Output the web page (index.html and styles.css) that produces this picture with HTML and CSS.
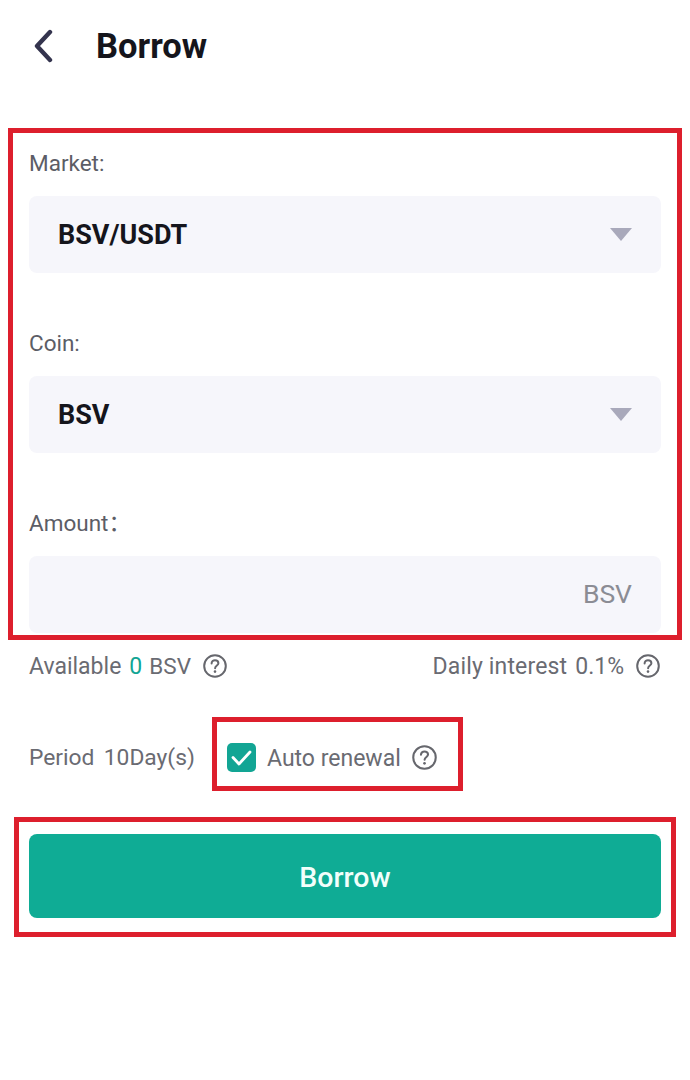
FILE: index.html
```html
<!DOCTYPE html>
<html lang="en">
<head>
    <meta charset="UTF-8">
    <meta name="viewport" content="width=device-width, initial-scale=1.0">
    <title>Borrow</title>
    <link rel="stylesheet" href="styles.css">
</head>
<body>
    <!-- Header -->
    <div class="header">
        <svg class="back" viewBox="0 0 24 34" width="24" height="34">
            <path d="M19 3 L6 17 L19 31" fill="none" stroke="#34344e" stroke-width="4.4" stroke-linecap="round" stroke-linejoin="round"/>
        </svg>
        <h1>Borrow</h1>
    </div>

    <!-- Form -->
    <div class="form-box">
        <div class="label label-first">Market:</div>
        <div class="field">
            <span class="value">BSV/USDT</span>
            <span class="caret"></span>
        </div>
        <div class="label">Coin:</div>
        <div class="field">
            <span class="value">BSV</span>
            <span class="caret"></span>
        </div>
        <div class="label">Amount<span class="colon">：</span></div>
        <div class="field field-input">
            <span class="unit">BSV</span>
        </div>
    </div>

    <!-- Info -->
    <div class="info-row">
        <div class="info">
            <span>Available</span>
            <span class="zero">0</span>
            <span class="coin">BSV</span>
            <svg class="help" viewBox="0 0 24 24"><use href="#help-icon"/></svg>
        </div>
        <div class="info">
            <span class="daily">Daily interest</span>
            <span class="rate">0.1%</span>
            <svg class="help" viewBox="0 0 24 24"><use href="#help-icon"/></svg>
        </div>
    </div>

    <div class="period-row">
        <span class="period">Period&nbsp; 10Day(s)</span>
        <div class="renewal-box">
            <span class="checkbox">
                <svg viewBox="0 0 29 29" width="29" height="29">
                    <path d="M6 14.5 L12 21 L23 9" fill="none" stroke="#fff" stroke-width="2.8" stroke-linecap="round" stroke-linejoin="round"/>
                </svg>
            </span>
            <span class="renewal-text">Auto renewal</span>
            <svg class="help help-renewal" viewBox="0 0 24 24"><use href="#help-icon"/></svg>
        </div>
    </div>

    <div class="button-box">
        <button class="btn">Borrow</button>
    </div>

    <svg width="0" height="0" class="defs">
        <symbol id="help-icon" viewBox="0 0 24 24">
            <circle cx="12" cy="12" r="10.8" fill="none" stroke="#66676d" stroke-width="2"/>
            <path d="M8.6 9.4 C8.6 7.4 10.2 6.2 12 6.2 C13.9 6.2 15.4 7.5 15.4 9.2 C15.4 11.4 12.1 11.6 12.1 14.2" fill="none" stroke="#66676d" stroke-width="2" stroke-linecap="round"/>
            <circle cx="12" cy="17.6" r="1.3" fill="#66676d"/>
        </symbol>
    </svg>
</body>
</html>
```

FILE: styles.css
```css
* {
    margin: 0;
    padding: 0;
    box-sizing: border-box;
}

body {
    font-family: Roboto, 'Liberation Sans', sans-serif;
    background: white;
    color: #6a6b72;
    min-height: 100vh;
}

.header {
    height: 128px;
    padding: 29px 0 0 31px;
    display: flex;
    align-items: flex-start;
}

.back {
    display: block;
}

.header h1 {
    margin-left: 41px;
    font-size: 34.5px;
    line-height: 35px;
    font-weight: bold;
    color: #15151c;
}

.form-box {
    margin: 0 8px;
    height: 512px;
    border: 5px solid #dd1f2d;
    padding: 0 16px;
}

.label {
    height: 103px;
    padding-top: 54px;
    font-size: 22.5px;
    line-height: 32px;
    color: #5c5d66;
}

.label-first {
    height: 63px;
    padding-top: 14px;
}

.colon {
    font-family: 'Noto Sans CJK SC', sans-serif;
    line-height: 1;
}

.field {
    height: 77px;
    padding: 0 29px;
    background: #f6f6fb;
    border-radius: 8px;
    display: flex;
    align-items: center;
    justify-content: space-between;
}

.value {
    font-size: 27px;
    line-height: 32px;
    font-weight: bold;
    color: #15151c;
}

.caret {
    width: 0;
    height: 0;
    border-left: 11px solid transparent;
    border-right: 11px solid transparent;
    border-top: 13px solid #a9a9bb;
}

.field-input {
    justify-content: flex-end;
    padding-bottom: 2px;
}

.unit {
    font-size: 26.5px;
    color: #8b8c94;
}

.info-row {
    height: 54px;
    padding: 0 30px 2px 29px;
    display: flex;
    align-items: center;
    justify-content: space-between;
    font-size: 23px;
}

.info {
    display: flex;
    align-items: center;
    gap: 8px;
}

.zero {
    color: #12a594;
}

.coin {
    margin-left: -1px;
    font-size: 22.5px;
}

.daily {
    letter-spacing: 0.15px;
}

.help {
    width: 24px;
    height: 24px;
    margin-left: 4px;
    display: block;
}

.period-row {
    margin-top: 23px;
    padding-left: 29px;
    display: flex;
    align-items: center;
    font-size: 23px;
}

.period {
    width: 183px;
    padding-top: 7px;
    font-size: 22.8px;
    word-spacing: -1px;
    white-space: nowrap;
}

.renewal-box {
    width: 251px;
    height: 74px;
    border: 5px solid #dd1f2d;
    padding: 7px 0 0 10px;
    display: flex;
    align-items: center;
}

.checkbox {
    width: 29px;
    height: 29px;
    border-radius: 5px;
    background: #12a594;
    display: block;
}

.checkbox svg {
    display: block;
}

.renewal-text {
    margin: 2px 0 0 11px;
}

.help-renewal {
    width: 25px;
    height: 25px;
    margin-left: 11px;
}

.button-box {
    margin: 26px 14px 0;
    height: 120px;
    border: 5px solid #dd1f2d;
    padding: 12px 10px 14px;
}

.btn {
    width: 100%;
    height: 84px;
    padding-top: 2px;
    border: none;
    border-radius: 8px;
    background: #0fac95;
    color: #f2fffb;
    font-family: Roboto, 'Liberation Sans', sans-serif;
    font-size: 28.5px;
    font-weight: 500;
}

.defs {
    position: absolute;
}
```
